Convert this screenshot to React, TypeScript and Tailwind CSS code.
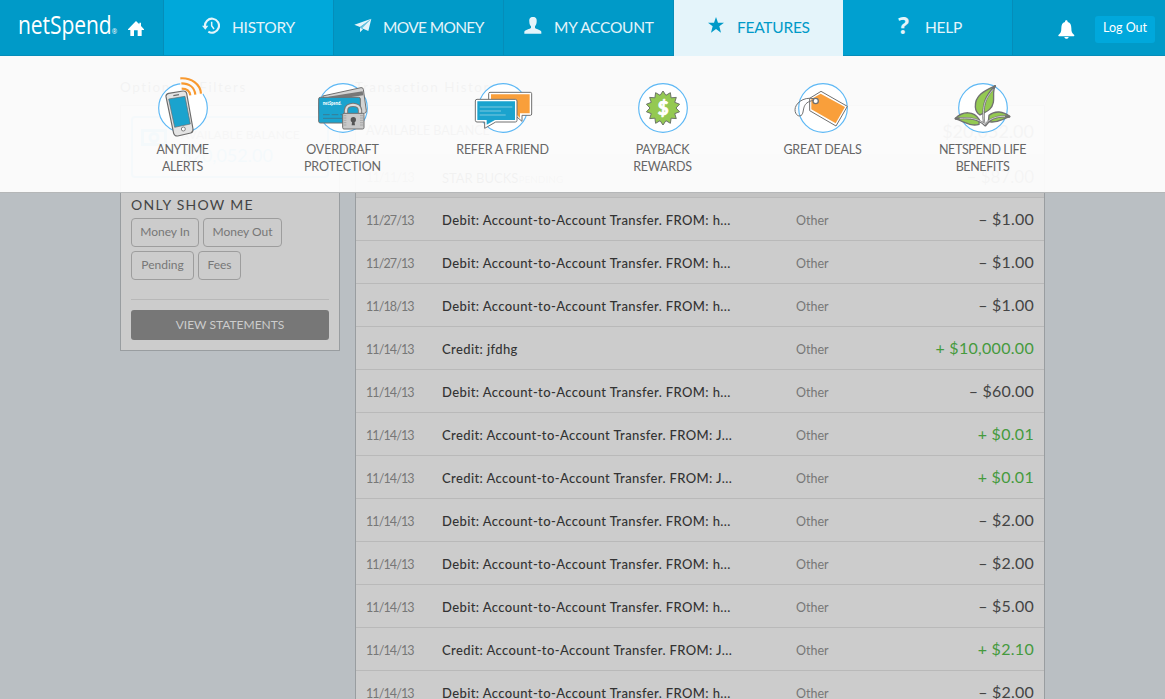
import type { ReactNode } from "react";

const transactions = [
  ["11/27/13", "Debit: Account-to-Account Transfer. FROM: h...", "– $1.00"],
  ["11/27/13", "Debit: Account-to-Account Transfer. FROM: h...", "– $1.00"],
  ["11/18/13", "Debit: Account-to-Account Transfer. FROM: h...", "– $1.00"],
  ["11/14/13", "Credit: jfdhg", "+ $10,000.00"],
  ["11/14/13", "Debit: Account-to-Account Transfer. FROM: h...", "– $60.00"],
  ["11/14/13", "Credit: Account-to-Account Transfer. FROM: J...", "+ $0.01"],
  ["11/14/13", "Credit: Account-to-Account Transfer. FROM: J...", "+ $0.01"],
  ["11/14/13", "Debit: Account-to-Account Transfer. FROM: h...", "– $2.00"],
  ["11/14/13", "Debit: Account-to-Account Transfer. FROM: h...", "– $2.00"],
  ["11/14/13", "Debit: Account-to-Account Transfer. FROM: h...", "– $5.00"],
  ["11/14/13", "Credit: Account-to-Account Transfer. FROM: J...", "+ $2.10"],
  ["11/14/13", "Debit: Account-to-Account Transfer. FROM: h...", "– $2.00"],
];

function HomeIcon() {
  return (
    <svg className="mt-px h-[15px] w-4" viewBox="0 0 48 45" fill="white">
      <path d="M24 0 34 10V5h5v10l9 10v2h-7v18H29V28H18v17H7V27H0v-2z" />
    </svg>
  );
}

function HistoryIcon() {
  return (
    <svg className="h-[18px] w-[18px]" viewBox="0 0 54 54" fill="none" stroke="currentColor">
      <path d="M9 28A21 21 0 1 1 19 44" strokeWidth="6.5" />
      <path d="M0 26h19l-9 12z" fill="currentColor" stroke="none" />
      <path d="M29 14v12l7 10" strokeWidth="4.5" />
    </svg>
  );
}

function PlaneIcon() {
  return (
    <svg className="h-[15px] w-[18px]" viewBox="0 0 54 45" fill="currentColor">
      <path d="M1 20 52 2 18 27zM52 2 43 39 24 31zM18 30l9 4-9 9z" />
      <path d="M52 2 18 28v10z" opacity=".45" />
    </svg>
  );
}

function UserIcon() {
  return (
    <svg className="h-[17px] w-[18px]" viewBox="0 0 54 51" fill="currentColor">
      <path d="M27 0c9 0 12 6 11 14 0 7-3 11-5 14v5c1 3 18 5 19 11v6H1v-6c1-6 18-8 20-11v-5c-3-3-5-7-5-14C15 6 18 0 27 0z" />
    </svg>
  );
}

function StarIcon() {
  return (
    <svg className="h-4 w-4" viewBox="0 0 48 48" fill="currentColor">
      <path d="m24 0 6 17h18L34 28l5 19-15-11L9 47l5-19L0 17h18z" />
    </svg>
  );
}

function BellIcon() {
  return (
    <svg className="h-[19px] w-[17px]" viewBox="0 0 51 57" fill="white">
      <path d="M25 1c3 0 4 2 4 5 8 2 11 9 11 18 0 11 2 16 8 20 2 2 1 4-1 5H3c-2-1-3-3-1-5 6-4 8-9 8-20 0-9 3-16 11-18 0-3 1-5 4-5z" />
      <path d="M19 51h13c-1 7-12 7-13 0z" />
    </svg>
  );
}

function FeatureIcon({ children }: { children: ReactNode }) {
  return (
    <svg className="h-16 w-20" viewBox="-120 -96 240 192" fill="none" strokeLinejoin="round">
      <circle r="73" fill="white" stroke="#5db8f5" strokeWidth="3.5" />
      {children}
    </svg>
  );
}

function AlertsIcon() {
  return (
    <FeatureIcon>
      <path d="M-8-66V-92L66-52l-9 14z" fill="#fafafa" />
      <g stroke="#f8992f" strokeWidth="6.5" fill="none">
        <path d="M-8-89C25-91 52-72 54-43" />
        <path d="M-5-74C18-74 35-62 37-40" />
        <path d="M-4-58C11-58 20-53 22-38" />
      </g>
      <g stroke="#6b6b6b" strokeWidth="3.5">
        <path d="M-43-44 0-51q9-1 11 7L30 63q1 9-7 12l-39 9q-9 1-12-8L-51-34q-1-8 8-10z" fill="#e4e4e4" />
        <path d="m-43-27 49-8L22 48l-47 10z" fill="#1ba3ce" strokeWidth="2" />
        <circle cx="1" cy="63" r="6" fill="white" strokeWidth="2.5" />
        <path d="m-29-37 17-3" />
      </g>
    </FeatureIcon>
  );
}

function ProtectionIcon() {
  return (
    <FeatureIcon>
      <g stroke="#707070" strokeWidth="3">
        <path d="m-61-36 115-25q6-1 7 5L70 8q1 7-6 8l-86 9z" fill="#d3d3d3" />
        <path d="m-45-34 104-16 2 12-72 10z" fill="#777" stroke="none" />
        <path d="M-68-32H47q5 0 5 5v67q0 5-5 5H-68q-5 0-5-5v-67q0-5 5-5z" fill="#1ba3ce" />
        <path d="M-60 20h20m6 0h20m6 0h12M-60 31h58" stroke="#397c95" />
        <path d="M9 16V7C9-15 51-15 51 7v9" stroke="#777" strokeWidth="13" />
        <path d="M9 16V7C9-15 51-15 51 7v9" stroke="#ddd" strokeWidth="7" />
        <rect x="-1" y="16" width="64" height="47" rx="4" fill="#c9c9c9" />
        <path d="M2 23h8m-8 7h8m-8 7h8m-8 7h8m-8 7h8M51 23h9m-9 7h9m-9 7h9m-9 7h9m-9 7h9" strokeWidth="2" stroke="#999" />
        <circle cx="31" cy="35" r="8" fill="#555" stroke="none" />
        <path d="M28 36h6l2 16H26z" fill="#555" stroke="none" />
      </g>
      <text x="-61" y="-9" fill="white" fontFamily="Open Sans, sans-serif" fontSize="17" fontWeight="700" textLength="56" lengthAdjust="spacingAndGlyphs">netSpend.</text>
    </FeatureIcon>
  );
}

function FriendIcon() {
  return (
    <FeatureIcon>
      <g stroke="#707070" strokeWidth="3">
        <path d="M-39-47H82q4 0 4 4v61q0 4-4 4H57v18L36 22h-75q-4 0-4-4v-61q0-4 4-4z" fill="white" />
        <path d="M-36-41H80v57H51v14L37 16h-73z" fill="#f99f3b" stroke="none" />
        <path d="M-78-26H37q5 0 5 5v58q0 5-5 5H-22L-55 61V42h-23q-5 0-5-5v-58q0-5 5-5z" fill="white" />
        <path d="M-77-20H36v56H-24L-49 50V36h-28z" fill="#1ba3ce" stroke="none" />
        <path d="M-70-3h98M-70 9h64M-70 21h78" stroke="#7cc8df" />
      </g>
    </FeatureIcon>
  );
}

function RewardsIcon() {
  const points = Array.from({ length: 28 }, (_, i) => {
    const angle = (i * Math.PI) / 14 - Math.PI / 2;
    const radius = i % 2 === 0 ? 51 : 39;
    return `${radius * Math.cos(angle)},${radius * Math.sin(angle)}`;
  }).join(" ");
  return (
    <FeatureIcon>
      <polygon points={points} fill="#94c952" stroke="#6d7568" strokeWidth="3" />
      <text x="0" y="20" textAnchor="middle" fill="white" stroke="white" strokeWidth="2" fontFamily="Lato, sans-serif" fontWeight="900" fontSize="56">$</text>
    </FeatureIcon>
  );
}

function DealsIcon() {
  return (
    <FeatureIcon>
      <g stroke="#707070" strokeWidth="3">
        <path d="M-6-50 73-5 39 54-40 8v-37z" fill="white" />
        <path d="M-7-43 66-3 38 46-35 4v-31z" fill="#f99f3b" stroke="none" />
        <circle cx="-22" cy="-21" r="8" fill="white" strokeWidth="4" />
        <path d="M-27-28C-61-35-84-12-84 5c0 17 14 24 21 15 8-12-2-37 35-43" />
      </g>
    </FeatureIcon>
  );
}

function LeafIcon() {
  return (
    <FeatureIcon>
      <g stroke="#717171" strokeWidth="4">
        <path d="M37-67C5-52-25-39-23-3c1 13 7 20 14 24C8 11 26 8 31-17c3-19-3-34 6-50z" fill="#94c952" />
        <path d="M-84 32c22-23 57-25 73 3l-1 14C-36 56-51 43-84 32z" fill="#94c952" />
        <path d="M81 26C60 9 36 7 18 22l-2 19c26 6 40-8 65-15z" fill="#94c952" />
        <path d="M37-67C12-39-6-15 4 50M-84 32c34-3 67-4 91 20 12-20 39-30 74-26" strokeWidth="7" />
        <path d="M30-56C10-31-5-12 4 48M-70 31c31-2 54-1 76 19 12-18 36-26 60-25" stroke="#ddd" strokeWidth="2.5" />
      </g>
    </FeatureIcon>
  );
}

const features = [
  { icon: <AlertsIcon />, lines: ["ANYTIME", "ALERTS"], spacing: "tracking-[-0.5px]" },
  { icon: <ProtectionIcon />, lines: ["OVERDRAFT", "PROTECTION"], spacing: "tracking-[-0.1px]" },
  { icon: <FriendIcon />, lines: ["REFER A FRIEND"], spacing: "tracking-[-0.25px]" },
  { icon: <RewardsIcon />, lines: ["PAYBACK", "REWARDS"], spacing: "tracking-[-0.2px]" },
  { icon: <DealsIcon />, lines: ["GREAT DEALS"], spacing: "tracking-[-0.2px]" },
  { icon: <LeafIcon />, lines: ["NETSPEND LIFE", "BENEFITS"], spacing: "tracking-[-0.38px]" },
];

function Header() {
  const tab = "flex h-full w-[170px] items-center border-r border-[#058db9]";
  return (
    <header className="relative z-20 flex h-14 border-b border-[#058db9] bg-[#009ac8] text-[15.5px] tracking-[-0.25px] text-[#e4f4fa]">
      <div className="flex w-[164px] shrink-0 items-center border-r border-[#058db9] pl-[18px]">
        <div className="flex w-[110px] shrink-0">
          <span className="origin-left scale-x-[.81] whitespace-nowrap font-['Open_Sans',sans-serif] text-[26px] leading-[52px] font-medium tracking-[-0.1px] text-white">
            netSpend<span className="text-[8px]">®</span>
          </span>
        </div>
        <HomeIcon />
      </div>
      <nav className="flex">
        <a className={`${tab} bg-[#00a8da] pl-[38px]`}>
          <span className="mb-1"><HistoryIcon /></span><span className="ml-3">HISTORY</span>
        </a>
        <a className={`${tab} pl-5`}>
          <span className="mb-[5px]"><PlaneIcon /></span><span className="ml-[11px] tracking-[-0.65px] whitespace-nowrap">MOVE MONEY</span>
        </a>
        <a className={`${tab} pl-5`}>
          <span className="mb-[5px]"><UserIcon /></span><span className="ml-3 whitespace-nowrap">MY ACCOUNT</span>
        </a>
        <a className="-mb-px flex w-[169px] items-center bg-[#e4f4fa] pb-px pl-[34px] text-[#009ac8]">
          <span className="mb-[5px]"><StarIcon /></span><span className="ml-[13px]">FEATURES</span>
        </a>
        <a className={`${tab} bg-[#00a0d0] pl-[55px]`}>
          <span className="mb-[5px] w-3 font-['Open_Sans',sans-serif] text-[23px] leading-none font-bold">?</span><span className="ml-[15px]">HELP</span>
        </a>
      </nav>
      <div className="ml-auto flex items-center pt-[3px] pr-[10px]">
        <BellIcon />
        <button className="ml-5 h-[27px] w-[60px] rounded-[3px] bg-[#00a8dc] pb-px text-[12.5px] tracking-normal text-white">Log Out</button>
      </div>
    </header>
  );
}

function FeaturesMenu() {
  return (
    <div className="absolute inset-x-0 top-14 z-20 flex h-[136px] justify-center bg-[#fdfdfd]/95 pt-5">
      {features.map(({ icon, lines, spacing }) => (
        <a key={lines[0]} className={`flex w-40 flex-col items-center text-[12.5px] leading-[17px] text-[#666] ${spacing}`}>
          <span className="mb-px">{icon}</span>
          {lines.map((line) => <span key={line}>{line}</span>)}
        </a>
      ))}
    </div>
  );
}

function Filters() {
  const chip = "h-[29px] rounded-[4px] border border-[#9d9d9d] pb-[2px] text-[12px] text-[#777]";
  return (
    <aside className="w-[220px]">
      <h2 className="h-[49px] pt-[21px] text-[13.5px] leading-5 tracking-[1.55px] text-[#333]">Options &amp; Filters</h2>
      <div className="h-[246px] border border-[#999da0] bg-[#ccc] px-[10px] pt-[10px]">
        <div className="flex h-[62px] items-center rounded-[4px] border-2 border-[#60b4cb] pl-2 text-[#50b1cb]">
          <svg className="mb-5 h-[17px] w-[26px]" viewBox="0 0 26 17" fill="none" stroke="currentColor" strokeWidth="3">
            <rect x="1.5" y="1.5" width="23" height="14" /><circle cx="13" cy="8.5" r="4" />
          </svg>
          <div className="ml-[14px] flex flex-col items-start">
            <span className="text-[12px] leading-4 whitespace-nowrap text-[#777]">AVAILABLE BALANCE</span>
            <span className="text-[18px] leading-6">$20,052.00</span>
          </div>
        </div>
        <h3 className="mt-[17px] text-[14px] leading-5 tracking-[1.25px] text-[#444]">ONLY SHOW ME</h3>
        <div className="mt-[3px] flex flex-wrap gap-1">
          <button className={`${chip} w-[68px]`}>Money In</button>
          <button className={`${chip} w-[79px]`}>Money Out</button>
          <button className={`${chip} w-[63px]`}>Pending</button>
          <button className={`${chip} w-[43px]`}>Fees</button>
        </div>
        <hr className="mt-[19px] border-[#b8b8b8]" />
        <button className="mt-[10px] h-[30px] w-full rounded-[3px] bg-[#777] text-[12px] text-[#ccc]">VIEW STATEMENTS</button>
      </div>
    </aside>
  );
}

function History() {
  const row = "grid h-[43px] grid-cols-[76px_354px_1fr_auto] border-b border-[#b9b9b9] px-[10px] text-[12.5px] leading-[46px] text-[#777]";
  return (
    <section className="w-[690px]">
      <h2 className="h-[49px] pt-[21px] text-[13.5px] leading-5 tracking-[1.5px] text-[#333]">Transaction History</h2>
      <div className="border border-[#999da0] bg-[#ccc]">
        <div className="flex h-[49px] items-center justify-between border-b border-[#b9b9b9] px-[10px] pt-[2px] text-[#555]">
          <span className="text-[12.5px]">AVAILABLE BALANCE</span>
          <span className="text-[18px]">$20,052.00</span>
        </div>
        <div className={`${row} bg-[#c3c3c3]`}>
          <span className="tracking-[-0.85px]">11/11/13</span>
          <span className="text-[13px] text-[#222]">STAR BUCKS<span className="text-[10px] text-[#777]">PENDING</span></span>
          <span />
          <span className="text-[17px] leading-[43px] text-[#555]">– $87.00</span>
        </div>
        {transactions.map(([date, description, amount], i) => (
          <div className={row} key={i}>
            <span className="tracking-[-0.9px]">{date}</span>
            <span className="text-[13px] leading-[44px] font-medium tracking-[.39px] text-[#333]">{description}</span>
            <span>Other</span>
            <span className={`text-[16px] leading-[42px] ${amount[0] === "+" ? "tracking-[.3px] text-[#459a3d]" : "tracking-[.2px] text-[#444]"}`}>{amount}</span>
          </div>
        ))}
      </div>
    </section>
  );
}

export default function App() {
  return (
    <div className="relative h-[699px] overflow-hidden bg-[#babfc3] font-['Lato',sans-serif]">
      <Header />
      <FeaturesMenu />
      <div className="absolute inset-x-0 top-[192px] z-10 h-px bg-[#b5b7b8]" />
      <main className="flex gap-[15px] pl-[120px]">
        <Filters />
        <History />
      </main>
    </div>
  );
}
